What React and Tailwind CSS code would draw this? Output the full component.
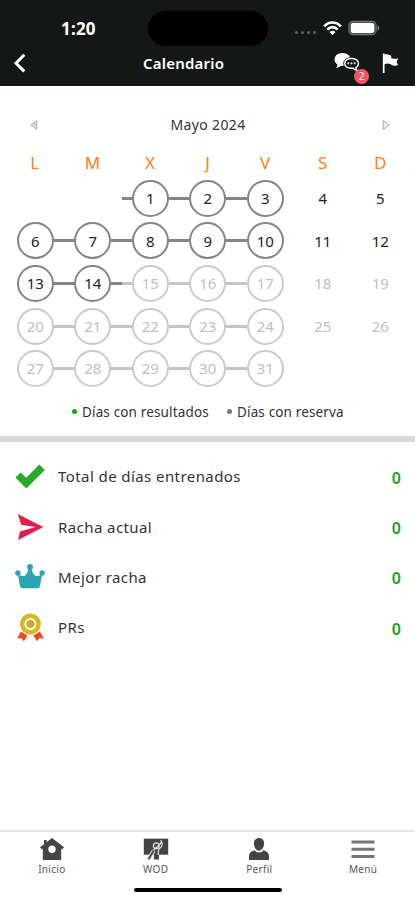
import React from "react";

const WEEKDAYS = ["L", "M", "X", "J", "V", "S", "D"];

// Weeks start on Monday, null is an empty cell
const WEEKS = [
  [null, null, 1, 2, 3, 4, 5],
  [6, 7, 8, 9, 10, 11, 12],
  [13, 14, 15, 16, 17, 18, 19],
  [20, 21, 22, 23, 24, 25, 26],
  [27, 28, 29, 30, 31, null, null],
];

const TODAY = 14;

const StatusBar = () => (
  <div className="h-[46px] pt-[11px] flex items-start">
    <div className="w-[148px] pl-[61px] pt-[5px] text-[17px] leading-[26px] font-bold tracking-[0.2px]">1:20</div>
    <div className="w-[120px] h-[35px] rounded-full bg-black" />
    <div className="flex items-center pl-[27px] pt-[9px]">
      <div className="flex gap-[3px] mt-[9px]">
        {[0, 1, 2, 3].map((dot) => (
          <span key={dot} className="w-[3px] h-[3px] rounded-full bg-[#5d6161]" />
        ))}
      </div>
      <svg className="ml-[7px]" width="19" height="16" viewBox="0 0 19 16" fill="none" stroke="#fff" strokeWidth="2.7">
        <path d="M1.2 6.4C5.8 1.2 13.2 1.2 17.8 6.4" />
        <path d="M4.4 9.6c3-3.2 7.2-3.2 10.2 0" />
        <path d="M9.5 15.2 6.5 12c1.8-1.7 4.2-1.7 6 0z" fill="#fff" stroke="none" />
      </svg>
      <svg className="ml-[6px]" width="32" height="16" viewBox="0 0 32 16">
        <rect x="1" y="1.3" width="27" height="13.4" rx="4" fill="none" stroke="#737877" strokeWidth="1.3" />
        <rect x="2.6" y="2.8" width="23.8" height="10.4" rx="2.6" fill="#fff" />
        <path d="M29.6 5.5c2 .8 2 4.2 0 5z" fill="#8c908f" />
      </svg>
    </div>
  </div>
);

const ChatIcon = () => (
  <svg width="26" height="21" viewBox="0 0 26 21">
    <path d="M8.4 1C3.8 1 .6 3.8.6 7.4c0 2 1 3.8 2.8 5 0 1.5-.5 2.7-1.6 3.7 2-.2 3.6-1 4.800-2.300h2.800c4-.3 7.200-3 7.200-6.400C16.600 3.800 13 1 8.400 1z" fill="#fff" />
    <path d="M17.500 6.500c-4 0-6.800 2-6.800 4.900s2.800 4.800 6.600 4.800h1.800c1 1.200 2.200 1.900 3.800 2.100-.7-.9-1-1.900-1-2.900 1.700-.8 2.600-2.300 2.600-4 0-2.900-3-4.900-7-4.900z" fill="#131817" stroke="#131817" strokeWidth="3" />
    <path d="M17.500 6.500c-4 0-6.800 2-6.800 4.900s2.800 4.800 6.600 4.800h1.800c1 1.200 2.200 1.900 3.800 2.100-.7-.9-1-1.900-1-2.900 1.700-.8 2.600-2.300 2.600-4 0-2.900-3-4.900-7-4.900z" fill="#131817" stroke="#fff" strokeWidth="1.400" />
    <g fill="#ddd">
      <circle cx="14.300" cy="11.300" r="1.100" />
      <circle cx="17.500" cy="11.300" r="1.100" />
      <circle cx="20.700" cy="11.300" r="1.100" />
    </g>
  </svg>
);

const TopBar = () => (
  <div className="h-[40px] px-[13px] grid grid-cols-[1fr_auto_1fr] items-start">
    <svg className="mt-[7px]" width="14" height="20" viewBox="0 0 14 20" fill="none" stroke="#fff" strokeWidth="3">
      <path d="M11.300 1.800 3 10.200l8.300 8.200" />
    </svg>
    <h1 className="w-[82px] -ml-[47px] pt-[6px] text-[15px] leading-[22px] font-semibold tracking-[0.2px] whitespace-nowrap">Calendario</h1>
    <div className="flex justify-end gap-[22px]">
      <div className="relative mt-[6px]">
        <ChatIcon />
        <span className="absolute left-[20px] top-[17px] w-[15px] h-[15px] rounded-full bg-[#f35660] text-[10px] leading-[15px] text-center">2</span>
      </div>
      <svg className="mt-[6px]" width="20" height="22" viewBox="0 0 20 22">
        <path d="M1.700 1.500v19.500" stroke="#fff" strokeWidth="1.700" />
        <path d="M1.800 2.500c3.400-1 5.700.2 7.400 1.300v2.500c2.300.7 4.600.5 7.300-.1L14.500 9.300l1.500 4c-3.400 1-5.700.3-7.700-1.300-2.200-.8-4-.8-6.500.6z" fill="#fff" />
      </svg>
    </div>
  </div>
);

const DayCell = ({ day, column }) => {
  if (!day) return <div className="h-[42.6px]" />;

  const future = day > TODAY;
  const textColor = future ? "text-[#c0c0c0]" : "text-[#222]";

  // Weekends are plain numbers
  if (column > 4) {
    return <div className={`h-[42.6px] flex items-center justify-center ${textColor}`}>{day}</div>;
  }

  const lineColor = future ? "bg-[#c4c4c4]" : "bg-[#858585]";
  const borderColor = future ? "border-[#cbcbcb]" : "border-[#858585]";

  return (
    <div className="h-[42.6px] flex items-center">
      <span className={`flex-1 h-[3px] ${column > 0 ? lineColor : ""}`} />
      <span className={`w-[37px] h-[37px] rounded-full border-2 flex items-center justify-center ${borderColor} ${textColor}`}>
        {day}
      </span>
      <span className={`flex-1 h-[3px] ${column < 4 ? lineColor : ""}`} />
    </div>
  );
};

const Calendar = () => (
  <section className="h-[350px] px-[6px] pt-[28px]">
    <div className="flex items-center justify-between pl-[23px] pr-[18px] h-[22px]">
      <svg width="10" height="12" viewBox="0 0 10 12" fill="#d8d8d8" stroke="#b5b5b5">
        <path d="M7.800 1.500v9L1.800 6z" />
      </svg>
      <h2 className="-ml-[4px] text-[14px] leading-[22px] tracking-[0.35px] text-[#333]">Mayo 2024</h2>
      <svg width="10" height="12" viewBox="0 0 10 12" fill="#eee" stroke="#aaa">
        <path d="M2.200 1.500v9l6-4.500z" />
      </svg>
    </div>
    <div className="grid grid-cols-7 mt-[14px] h-[26px] text-center text-[17px] leading-[25px] text-[#ff7f11]">
      {WEEKDAYS.map((name) => (
        <span key={name}>{name}</span>
      ))}
    </div>
    <div className="grid grid-cols-7 mt-px ml-[0.5px] text-[15px]">
      {WEEKS.flat().map((day, index) => (
        <DayCell key={index} day={day} column={index % 7} />
      ))}
    </div>
    <div className="flex items-center pl-[66px] mt-[12px] text-[13.5px] leading-[20px] tracking-[0.15px] text-[#333] whitespace-nowrap">
      <span className="w-[5px] h-[5px] mr-[5px] rounded-full bg-[#12a812]" />
      <span className="w-[128px]">Días con resultados</span>
      <span className="w-[5px] h-[5px] ml-[17px] mr-[5px] rounded-full bg-[#777]" />
      <span>Días con reserva</span>
    </div>
  </section>
);

const CheckIcon = () => (
  <svg width="30" height="26" viewBox="0 0 30 26">
    <path d="M.5 13.500 5.600 8.400l5.700 5.400L24.400.5l5.400 5.400L11.300 24.500z" fill="#22ac28" />
  </svg>
);

const ArrowIcon = () => (
  <svg width="28" height="28" viewBox="0 0 28 28" fill="#e51b4c">
    <path d="M1.800.9 27.300 13.900l-25.200 13L4 18.600l15.500-4.700L5.300 11.700z" />
  </svg>
);

const CrownIcon = () => (
  <svg width="30" height="26" viewBox="0 0 30 26" fill="#2ba5b2">
    <circle cx="15" cy="3" r="2.900" />
    <circle cx="2.900" cy="9" r="2.700" />
    <circle cx="27.100" cy="9" r="2.700" />
    <path d="M2.700 9.500c3 3.200 6.600 3.200 8.300 1 1.300-1.600 2.200-3.500 2.500-5.700h3c.3 2.200 1.200 4.100 2.500 5.700 1.700 2.200 5.300 2.200 8.300-1L25 22c-.4 1.500-1.300 2.200-2.700 2.200H7.700C6.300 24.200 5.400 23.500 5 22z" />
  </svg>
);

const MedalIcon = () => (
  <svg width="28" height="29" viewBox="0 0 28 29">
    <path d="m4.800 18.500 6.700 3.800-3.700 5.900-2.300-3-4.400.3z" fill="#f04a20" />
    <path d="m24 18.500-6.700 3.800 3.700 5.900 2.300-3 4.400.3z" fill="#f04a20" />
    <circle cx="14.400" cy="11" r="11.200" fill="#fff" />
    <circle cx="14.400" cy="11" r="10.500" fill="#d6b91f" />
    <circle cx="14.400" cy="11" r="5" fill="#c9ab2b" stroke="#fff" strokeWidth="2" />
  </svg>
);

const STATS = [
  { label: "Total de días entrenados", value: 0, icon: CheckIcon },
  { label: "Racha actual", value: 0, icon: ArrowIcon },
  { label: "Mejor racha", value: 0, icon: CrownIcon },
  { label: "PRs", value: 0, icon: MedalIcon },
];

const StatRow = ({ label, value, icon: Icon }) => (
  <div className="h-[50.2px] pl-[15px] pr-[14px] flex items-center">
    <span className="w-[30px] flex justify-center">
      <Icon />
    </span>
    <span className="ml-[13px] -mt-px text-[15px] tracking-[0.42px] text-[#333]">{label}</span>
    <span className="ml-auto pt-[2px] text-[16px] font-semibold text-[#17a51b]">{value}</span>
  </div>
);

const HomeIcon = () => (
  <svg width="24" height="22" viewBox="0 0 24 22" fill="#444">
    <path fillRule="evenodd" d="M12 0 24 9.300l-1.500 2-1.300-.9V22H2.800V10.400l-1.300.9-1.500-2L4 6.200V2h2.500v2.300zM12 7.500a3.700 3.700 0 1 0 0 7.400 3.700 3.700 0 0 0 0-7.400z" />
  </svg>
);

const WodIcon = () => (
  <svg width="26" height="22" viewBox="0 0 26 22">
    <path d="M.8.700h24.400v16H.8z" fill="#444" />
    <path d="M11 14h5v7.500h-5z" fill="#444" />
    <g fill="none" stroke="#ddd" strokeWidth="1.300">
      <circle cx="13.300" cy="7.800" r="2.900" />
      <path d="M10.500 12.500 18 5c1-1.700.5-2.800-.8-1.800M19 4.500c.6 2.500-.7 5-3.200 6.500l-.8 6" />
    </g>
    <path d="m10.800 12.500-5.300 8.700" stroke="#ddd" strokeWidth="4" />
    <path d="m10.800 12.500-5.300 8.700" stroke="#444" strokeWidth="1.800" />
  </svg>
);

const ProfileIcon = () => (
  <svg width="22" height="22" viewBox="0 0 22 22" fill="#444">
    <path d="M11 0C7.800 0 5.900 2.200 5.900 5.300c0 3.700 2.200 7.500 5.100 7.500s5.100-3.800 5.100-7.500C16.100 2.200 14.200 0 11 0z" />
    <path d="M6.500 12.200c2.500 3 6.500 3 9 0 3.700 1 5.500 2.700 5.500 6V22H1v-3.800c0-3.300 1.800-5 5.500-6z" />
  </svg>
);

const MenuIcon = () => (
  <svg width="24" height="22" viewBox="0 0 24 22" fill="#777">
    <path d="M.5 2.500h23v3H.5zM.5 9.700h23v3H.5zM.5 16.900h23v3H.5z" />
  </svg>
);

const TABS = [
  { label: "Inicio", icon: HomeIcon },
  { label: "WOD", icon: WodIcon },
  { label: "Perfil", icon: ProfileIcon },
  { label: "Menú", icon: MenuIcon },
];

const TabBar = () => (
  <nav className="h-[70px] border-t-2 border-[#e6e6e6]">
    <div className="h-[56px] pt-[6px] grid grid-cols-4">
      {TABS.map(({ label, icon: Icon }) => (
        <div key={label} className="flex flex-col items-center text-[10px] leading-[14px] tracking-[0.3px] text-[#555]">
          <Icon />
          <span className="mt-[2px]">{label}</span>
        </div>
      ))}
    </div>
    <div className="w-[148px] h-[4px] mx-auto rounded-full bg-black" />
  </nav>
);

const App = () => {
  return (
    <div className="w-full h-[900px] flex flex-col overflow-hidden bg-white font-['Noto_Sans',sans-serif]">
      <header className="h-[86px] bg-[#131817] text-white">
        <StatusBar />
        <TopBar />
      </header>
      <Calendar />
      <div className="h-[6px] bg-[#d9d9d9]" />
      <section className="flex-1 pt-[10px]">
        {STATS.map((stat) => (
          <StatRow key={stat.label} {...stat} />
        ))}
      </section>
      <TabBar />
    </div>
  );
};

export default App;
